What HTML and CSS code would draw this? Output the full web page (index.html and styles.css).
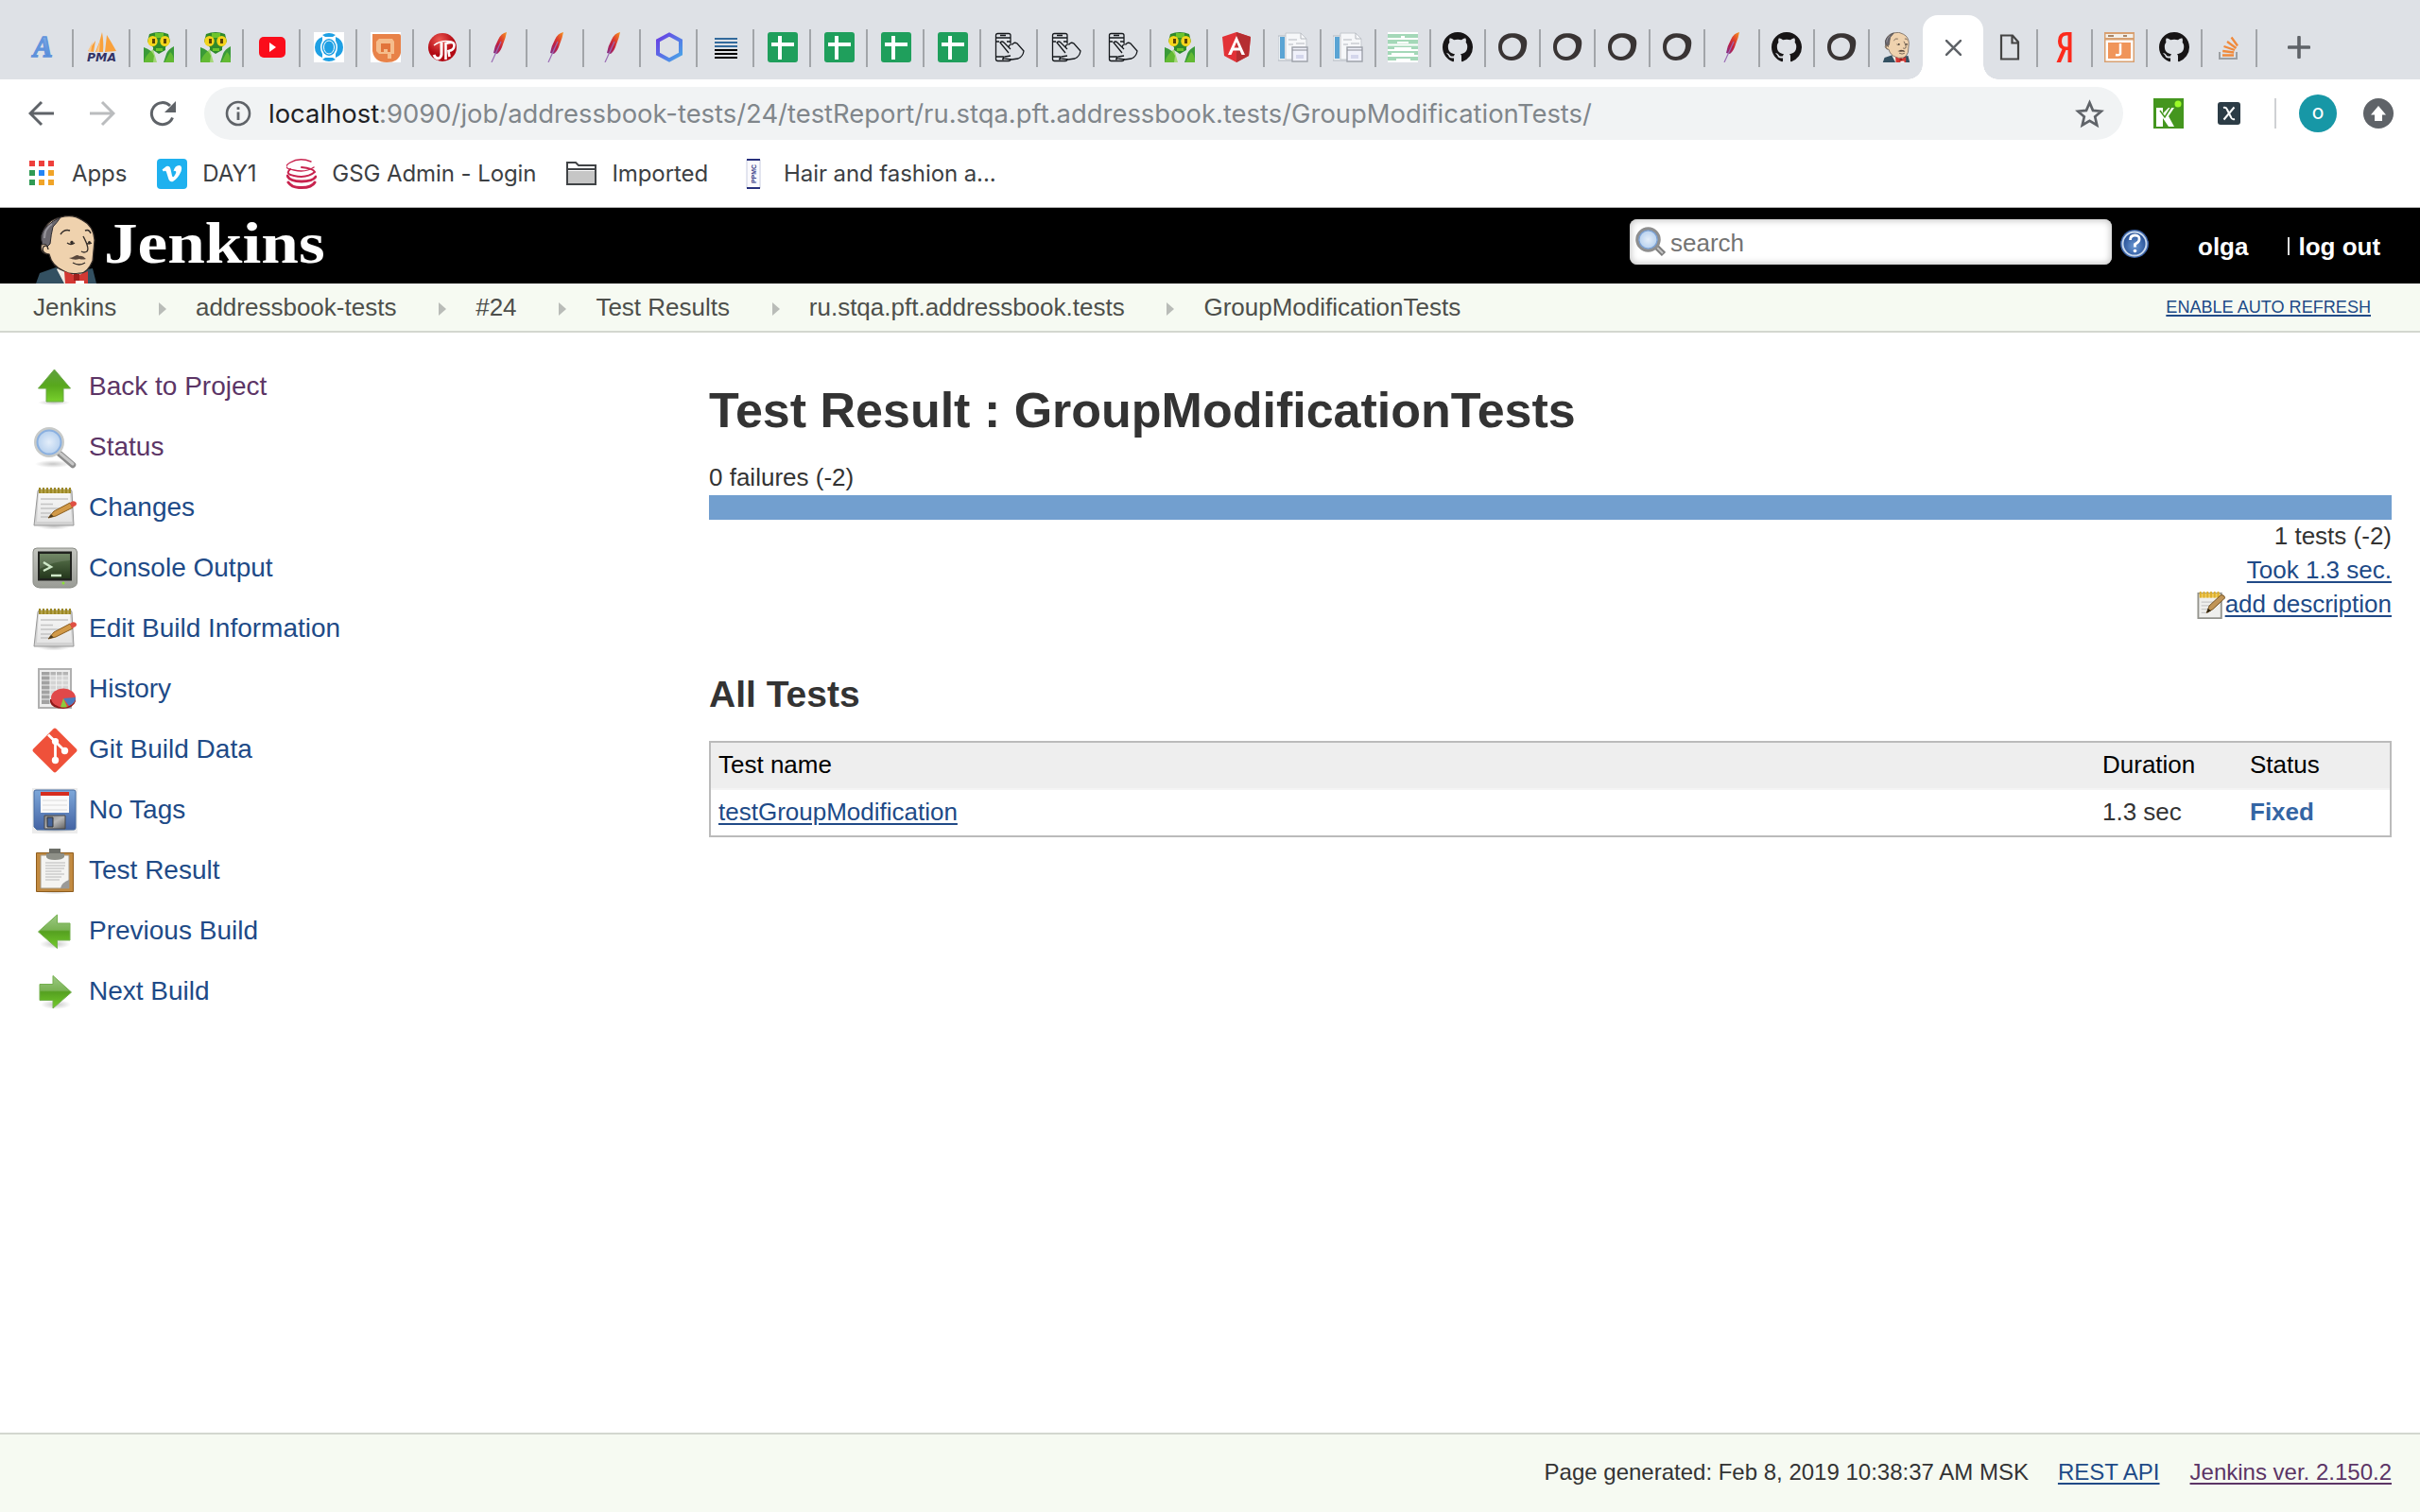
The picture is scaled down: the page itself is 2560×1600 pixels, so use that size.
FILE: index.html
```
<!DOCTYPE html>
<html lang="en">
<head>
<meta charset="utf-8">
<title>GroupModificationTests - Jenkins</title>
<link rel="stylesheet" href="styles.css">
</head>
<body>
<svg class="defs" aria-hidden="true">
  <defs>
    <linearGradient id="g-feather" x1="1" y1="0" x2="0" y2="1"><stop offset="0" stop-color="#f69923"/><stop offset=".35" stop-color="#e0452c"/><stop offset=".6" stop-color="#c21e3e"/><stop offset="1" stop-color="#7e2d8e"/></linearGradient>
    <linearGradient id="g-hex" x1="0" y1="0" x2="1" y2="1"><stop offset="0" stop-color="#6a3be4"/><stop offset="1" stop-color="#47a8e8"/></linearGradient>
    <linearGradient id="g-a" x1="0" y1="0" x2="0" y2="1"><stop offset="0" stop-color="#87b4e8"/><stop offset="1" stop-color="#4a80d4"/></linearGradient>
    <linearGradient id="g-green" x1="0" y1="0" x2="0" y2="1"><stop offset="0" stop-color="#9cc884"/><stop offset=".45" stop-color="#7ab354"/><stop offset=".5" stop-color="#55a020"/><stop offset="1" stop-color="#74cc2c"/></linearGradient>
    <linearGradient id="g-up" x1="0" y1="0" x2="0" y2="1"><stop offset="0" stop-color="#5fa040"/><stop offset=".5" stop-color="#58a81c"/><stop offset="1" stop-color="#78d02c"/></linearGradient>
    <linearGradient id="g-paper" x1="0" y1="0" x2="0" y2="1"><stop offset="0" stop-color="#f8f8f8"/><stop offset="1" stop-color="#e4e4e4"/></linearGradient>
    <radialGradient id="g-lens"><stop offset="0" stop-color="#e4eefa"/><stop offset="1" stop-color="#b0ccec"/></radialGradient>
    <linearGradient id="g-screen" x1="0" y1="0" x2="0" y2="1"><stop offset="0" stop-color="#5d7850"/><stop offset="1" stop-color="#24371c"/></linearGradient>
    <linearGradient id="g-case" x1="0" y1="0" x2="0" y2="1"><stop offset="0" stop-color="#c4c6c0"/><stop offset="1" stop-color="#9a9c96"/></linearGradient>
    <linearGradient id="g-floppy" x1="0" y1="0" x2="0" y2="1"><stop offset="0" stop-color="#7ea8da"/><stop offset="1" stop-color="#4464a4"/></linearGradient>
    <linearGradient id="g-metal" x1="0" y1="0" x2="1" y2="1"><stop offset="0" stop-color="#8a8a8a"/><stop offset=".5" stop-color="#b8b8b8"/><stop offset="1" stop-color="#606060"/></linearGradient>
    <radialGradient id="g-jr" cx=".4" cy=".25"><stop offset="0" stop-color="#ee5a52"/><stop offset="1" stop-color="#b20a14"/></radialGradient>
    <radialGradient id="g-help" cx=".5" cy=".6"><stop offset="0" stop-color="#6c9ad4"/><stop offset="1" stop-color="#2a549a"/></radialGradient>
    <radialGradient id="g-shadow"><stop offset="0" stop-color="#000" stop-opacity=".22"/><stop offset="1" stop-color="#000" stop-opacity="0"/></radialGradient>
  </defs>

  <symbol id="fav-snake" viewBox="0 0 32 32"><path d="M0 16q9 3 11 9l-1 7H0zM32 15q-6 3-8 8l-3 9h11z" fill="#3a9a38"/><path d="M0 32q2-8 10-14l4 14zM32 32q0-8-4-11l-6 11z" fill="#7ed030" opacity=".6"/><path d="M6 2q10-4 20 0l2 8-5 6v3l-7 4-6-4v-3l-6-6z" fill="#2f8a2a"/><path d="M12 1h9v5h-9zM13 17h7v3h-7z" fill="#6cc42c"/><ellipse cx="9.500" cy="9.500" rx="5.200" ry="5.500" fill="#f4d41c"/><ellipse cx="22.500" cy="9.500" rx="5.200" ry="5.500" fill="#f4d41c"/><rect x="9" y="7" width="3" height="5" fill="#5a4408"/><rect x="21" y="7" width="3" height="5" fill="#5a4408"/></symbol>
  <symbol id="fav-youtube" viewBox="0 0 32 32"><rect x="2" y="5" width="28" height="22" rx="5" fill="#fb0d1b"/><path d="m13 11 7 5-7 5z" fill="#fff"/></symbol>
  <symbol id="fav-eye" viewBox="0 0 32 32"><path d="M0 0h32v32H0z" fill="#fff"/><path d="M9 3q7-4 14 0l-3 2h-8zM9 29q7 4 14 0l-3-2h-8zM9 5v4q-4 7 0 14v4Q1 24 1 16T9 5zM23 5v4q4 7 0 14v4q8-3 8-11T23 5z" fill="#1fa0e4"/><ellipse cx="16" cy="16" rx="7.500" ry="9" fill="#1fa0e4"/><ellipse cx="16" cy="16" rx="5.500" ry="7" fill="none" stroke="#fff" stroke-width="1"/></symbol>
  <symbol id="fav-q" viewBox="0 0 32 32"><path d="M0 0h32v32H0z" fill="#fff"/><path d="M2 2h28q2 0 2 2v18q-2 10-15 10T2 20z" fill="#e88248"/><path d="M9 7h14l2 3v13h-3v5h-4v-5H9l-3-3V10z" fill="#f5bd8c"/><path d="M11 12h10v9h-3v-3h-4v3h-3z" fill="#e2743a"/></symbol>
  <symbol id="fav-jr" viewBox="0 0 32 32"><circle cx="16" cy="16" r="15" fill="url(#g-jr)"/><path d="M15 11v13q-1 4-4 4-3-1-4-4" fill="none" stroke="#fff" stroke-width="3"/><path d="M19.500 29V12q9-3 9 2 0 5-6 6l1 6" fill="none" stroke="#fff" stroke-width="2.600"/><path d="M7 14q9-7 21-3" fill="none" stroke="#fff" stroke-width="1.400"/></symbol>
  <symbol id="fav-feather" viewBox="0 0 32 32"><path d="M24 0q-6 1-9 8-4 7-5 14l4 1q4-3 6-10 3-7 4-13z" fill="url(#g-feather)"/><path d="M18 10 8 32" stroke="#9a6cb4" stroke-width="1.200" fill="none"/></symbol>
  <symbol id="fav-hex" viewBox="0 0 32 32"><path d="M16 2.500 28 9v14l-12 6.500L4 23V9z" fill="none" stroke="url(#g-hex)" stroke-width="4"/></symbol>
  <symbol id="fav-lines" viewBox="0 0 32 32"><path d="M4 7h24M4 11h24M4 15h24" stroke="#336a9c" stroke-width="2"/><path d="M4 19h24M4 23h24M4 27h24" stroke="#000" stroke-width="2"/></symbol>
  <symbol id="fav-sheet" viewBox="0 0 32 32"><rect width="32" height="32" rx="3" fill="#1f9f5c"/><path d="M11 4h4v7h13v4H15v14h-4V15H4v-4h7z" fill="#fff"/></symbol>
  <symbol id="fav-touch" viewBox="0 0 32 32"><g fill="none" stroke="#15181c" stroke-width="1.300"><path d="M17 12V3.500Q17 1.500 15 1.500H3.500q-2 0-2 2v25q0 2 2 2H15q2 0 2-2V28M1.500 6H17M1.500 26h8M6 3.500h6M8 28.500h2M2 10h3M13 10h4"/><path d="m15 22-9-11q2-2 4 0l7 7M15 16q1-4 4-3 2-3 5-1l7 8q-1 6-6 8l-7 1-8-1q-2-2 1-2l6-1"/></g></symbol>
  <symbol id="fav-angular" viewBox="0 0 32 32"><path d="M16 0 1 5l2 20 13 7 13-7 2-20z" fill="#e23237"/><path d="M16 0v32l13-7 2-20z" fill="#b52e31"/><path fill-rule="evenodd" d="M16 4 7 24h3.500l2-4.500h7l2 4.500H25zm0 6.500 2.500 6h-5z" fill="#fff"/></symbol>
  <symbol id="fav-docs" viewBox="0 0 32 32"><path d="M0 4h18v26H0z" fill="#eef1f4" stroke="#b4bac2"/><path d="M2 5h5v23H2z" fill="#5aa4d4"/><path d="M8 1h16l6 6v22H8z" fill="#f6f7f9" stroke="#c4c8ce"/><path d="M24 1v6h6M11 8h9M11 13h5M19 12h9" fill="none" stroke="#b4b8be"/><path d="M15 16h16v15H15z" fill="#f0f1fa" stroke="#9ea2aa" stroke-width="1.400"/><path d="M15 19h16" stroke="#8a8e96"/><path d="M19 24h8v4h-8z" fill="#d4d6ec"/></symbol>
  <symbol id="fav-pine" viewBox="0 0 32 32"><path d="M0 0h32v32H0z" fill="#a4d8b8"/><path d="M0 1h32M0 7h32M0 13.500h32M0 19h32M0 25h32M0 31h32M14 5h4M10 11h12M7 17h18M4 23h24M9 29h15" stroke="#fff" stroke-width="2"/></symbol>
  <symbol id="fav-github" viewBox="0 0 16 16"><path fill="#171516" d="M8 0C3.580 0 0 3.580 0 8c0 3.540 2.290 6.530 5.470 7.590.4.070.55-.17.55-.38 0-.19-.01-.82-.01-1.490-2.010.37-2.530-.49-2.690-.94-.09-.23-.48-.94-.82-1.130-.28-.15-.68-.52-.01-.53.63-.01 1.080.58 1.230.82.72 1.210 1.870.87 2.330.66.07-.52.28-.87.51-1.070-1.780-.2-3.640-.89-3.640-3.950 0-.87.31-1.590.82-2.150-.08-.2-.36-1.020.08-2.120 0 0 .67-.21 2.200.82.64-.18 1.320-.27 2-.27s1.360.09 2 .27c1.530-1.040 2.200-.82 2.200-.82.44 1.100.16 1.920.08 2.120.51.56.82 1.270.82 2.150 0 3.070-1.870 3.750-3.650 3.950.29.25.54.73.54 1.480 0 1.070-.01 1.930-.01 2.200 0 .21.15.46.55.38A8.013 8.013 0 0 0 16 8c0-4.420-3.580-8-8-8z"/></symbol>
  <symbol id="fav-ring" viewBox="0 0 32 32"><path fill-rule="evenodd" fill="#393434" d="M15 1.200C22 1 26 3 29 5.500c3 3 2.500 7 1.500 12C29 25 23 30 15 30 7 30 1 24 1 16 1 7 6 1.500 15 1.200zM14 6C9 7 5 10.500 5 16c0 6 4 10 9.500 10C21 26 25 20 25 14.500 25 9 20 5 14 6z"/></symbol>
  <symbol id="butler" viewBox="0 0 66 72">
    <path d="M1 72 5 61l17-6 20 4 19-3 4 16z" fill="#335061"/><path d="M23 57l8 15h16l3-12-22-7z" fill="#f0ede4"/>
    <path d="M10 40Q4 36 8 29L7 22Q11 5 27 2 40-2 50 5q12 6 13 21l-2 22q-6 14-14 13-10 2-16-2Q18 54 15 41z" fill="#efd2ae" stroke="#332c28" stroke-width="1.200"/>
    <path d="M8 31Q4 20 12 12 19 5 27 2q-4 6-8 10-2 8-3 18l-3 3q-1-4-5-2z" fill="#6a676e" stroke="#2c2a2e" stroke-width="1"/><path d="M10 24Q10 14 18 9" fill="none" stroke="#98969c" stroke-width="2"/>
    <path d="M13 41Q6 38 9 33q4-3 5 3" fill="#efd2ae" stroke="#332c28" stroke-width="1.400"/>
    <path d="M27 20q4-6 10-4M53 16q4-2 6 3M34 29q4 3 8 0M54 29q3 2 6 0M51 22q7 13 4 16-3 2-6 0M40 50q7 4 13 0" fill="none" stroke="#332c28" stroke-width="1.400"/><path d="M36 45q3 0 6-2 3-2 5 0 3-1 7 3-4 1-7 0-5 2-11-1z" fill="#5a483c"/>
    <circle cx="39" cy="28.500" r="1.700" fill="#332c28"/><circle cx="57.500" cy="28.500" r="1.500" fill="#332c28"/>
    <path d="M31 59l13 5 12-5v13H32z" fill="#d33833"/><path d="M41 62h6v7h-6z" fill="#a11f1c"/><path d="M43 69h9v3h-9z" fill="#fff"/>
  </symbol>
  <symbol id="fav-page" viewBox="0 0 32 32"><path d="M7 3.500h12l6 7v18H7zM18.500 3.500v8H25" fill="none" stroke="#444" stroke-width="2.200"/></symbol>
  <symbol id="fav-ya" viewBox="0 0 32 32"><path d="M23.500 0v32h-4V19h-2L12 32H7.500l6-14Q9 16 9 9.500 9 0 18 0zM19.500 3.500H18q-5 0-5 6t5 6h1.500z" fill="#fc2a1c" fill-rule="evenodd"/></symbol>
  <symbol id="fav-j" viewBox="0 0 32 32"><path d="M0 0h32v32H0z" fill="#d8a070"/><path d="M1.500 2h29v4h-29z" fill="#f4f0ea"/><path d="M4 3h6v2H4zM20 3h4v2h-4z" fill="#a88668"/><path d="M1.500 8.500h29v22h-29z" fill="#fff"/><path d="M4 11h24v17H4z" fill="#f0955a"/><path d="M17 12v11q-1 2-5 1" stroke="#fff" stroke-width="2.500" fill="none"/></symbol>
  <symbol id="fav-so" viewBox="0 0 32 32"><path d="M6 21v7h18v-7" fill="none" stroke="#9c9fa3" stroke-width="2"/><path d="M9 24.500h12M9.200 20l12 1.500M10.500 15l11.500 4M14 10l9.500 7M18.500 5.500l6.500 9" stroke="#f08a3c" stroke-width="2.300"/></symbol>

  <symbol id="notepad" viewBox="0 0 48 48"><ellipse cx="23" cy="43" rx="18" ry="3.500" fill="url(#g-shadow)"/><path d="M6 6q0-2 2-2h32q2 0 2 2l2 36H2z" fill="#d2d2d2" stroke="#989898"/><path d="M7 6h33l2 32H5z" fill="url(#g-paper)"/><path d="M7 4h34v4H7z" fill="#b4a24a"/><path d="M8 2v6m4-6v6m4-6v6m4-6v6m4-6v6m4-6v6m4-6v6m4-6v6m4-6v6" stroke="#9c8826" stroke-width="2"/><path d="M9 14h29M9 19.500h13M9 24h20M9 29h11M9 33h8" stroke="#c4c4c4" stroke-width="1.500"/><path d="M17 34l6-7 17-9 3 5-18 9z" fill="#d29a48" stroke="#8a5c1c"/><path d="M17 34l3-4 3 2.500z" fill="#4e3c20"/><path d="M40 18q3-3 6-1 2 2 0 4l-4 2z" fill="#e05044"/></symbol>
  <symbol id="lens" viewBox="0 0 48 48"><ellipse cx="22" cy="41" rx="19" ry="4" fill="url(#g-shadow)"/><path d="M29 30l14 12" stroke="#8c8c8c" stroke-width="6.500" stroke-linecap="round"/><path d="M30 30l13 11" stroke="#c8c8c8" stroke-width="3" stroke-linecap="round"/><circle cx="18" cy="18" r="14.500" fill="url(#g-lens)" stroke="#c8cac8" stroke-width="3"/><circle cx="18" cy="18" r="12.500" fill="none" stroke="#8ab0e0" stroke-width="2"/></symbol>
  <symbol id="lens-sm" viewBox="0 0 32 32"><path d="M21 20l9 9" stroke="#7c7c7c" stroke-width="6"/><path d="M22 21l7 7" stroke="#c4c4c4" stroke-width="2"/><circle cx="13.500" cy="13.500" r="11.500" fill="url(#g-lens)" stroke="#8e8e8e" stroke-width="3.500"/><circle cx="13.500" cy="13.500" r="9.600" fill="none" stroke="#7aa0d4" stroke-width="1.300"/></symbol>
  <symbol id="up" viewBox="0 0 48 48"><ellipse cx="23" cy="40" rx="17" ry="3" fill="url(#g-shadow)"/><path d="M23.500 5 40.500 25H33v14H15V25H6.500z" fill="url(#g-up)" stroke="#6aa844"/></symbol>
  <symbol id="arrow" viewBox="0 0 48 48"><ellipse cx="25" cy="37" rx="16" ry="5" fill="url(#g-shadow)"/><path d="M41.500 24 22 6.500v9H8v17h14V41z" fill="url(#g-green)" stroke="#74b04e"/></symbol>
  <symbol id="arrow-left" viewBox="0 0 48 48"><ellipse cx="24" cy="37" rx="16" ry="5" fill="url(#g-shadow)"/><path d="M6.500 24 26.500 6v9H40v18H26.500v8.500z" fill="url(#g-green)" stroke="#74b04e"/></symbol>
  <symbol id="console" viewBox="0 0 48 48"><path d="M5 2h38q4 0 4.500 4v32q0 5-7 6H8q-7-1-7-6V6q0-4 4-4z" fill="url(#g-case)" stroke="#8a8c86"/><path d="M6 5.500h36v31H6z" fill="#20221e"/><path d="M8 8h32v26H8z" fill="url(#g-screen)"/><path d="M8 8h32v7Q22 16 8 24z" fill="#fff" opacity=".13"/><path d="m12 17 8 5-8 4M20 31h11" fill="none" stroke="#cfe8c8" stroke-width="2.400"/><circle cx="33" cy="39" r="1.500" fill="#8ae234"/></symbol>
  <symbol id="history" viewBox="0 0 48 48"><path d="M7 2h34v41H7z" fill="#eee" stroke="#b0b0b0" stroke-width="2"/><path d="M10 5h28v34H10z" fill="#d4d4d4"/><path d="M10 5h9v34h-9z" fill="#a2a2a2"/><path d="M19 5h19v4H19z" fill="#b4b4b4"/><path d="M19 5v34M25.500 5v34M32 5v34M10 9h28M10 14h28M10 19h28M10 24h28M10 29h28M10 34h28" stroke="#f2f2f2" stroke-width="1"/><path d="M19 34v3q2 7 14 7 11-1 13-8v-3z" fill="#8e1a1a"/><ellipse cx="33" cy="32.500" rx="13" ry="10" fill="#e0484a"/><path d="M33 33 46 32q0 6-7 9z" fill="#4a7cc0"/><path d="m33 33 4 9q-4 1-7 0z" fill="#8ccc3c"/></symbol>
  <symbol id="git" viewBox="0 0 48 48"><path d="M22.500 1.200 1.200 22.500q-1.400 1.500 0 3l21.300 21.300q1.500 1.400 3 0l21.300-21.300q1.400-1.500 0-3L25.500 1.200q-1.500-1.400-3 0z" fill="#ef513a"/><path d="M17 7.500l17.500 17M24.500 14v20" stroke="#fff" stroke-width="2.800"/><circle cx="24.500" cy="14.500" r="3.600" fill="#fff"/><circle cx="34.500" cy="24.500" r="3.700" fill="#fff"/><circle cx="24.500" cy="34.500" r="3.700" fill="#fff"/></symbol>
  <symbol id="floppy" viewBox="0 0 48 48"><path d="M0 0h48v48H0z" fill="#ececec"/><ellipse cx="24" cy="44" rx="22" ry="3" fill="url(#g-shadow)"/><path d="M4 2h40q2 0 2 2v38q0 2-2 2H5l-3-3V4q0-2 2-2z" fill="url(#g-floppy)" stroke="#456a9e"/><path d="M9 5h30v21H9z" fill="#fafafa"/><path d="M9 4h30v4H9z" fill="#d62c1e"/><path d="M11 13h26M11 18h26M11 23h26" stroke="#dcdcdc"/><path d="M13 29h22v14H13z" fill="url(#g-metal)" stroke="#4a4a4a"/><path d="M16 31h6v10h-6z" fill="#44649c" stroke="#333"/></symbol>
  <symbol id="clipboard" viewBox="0 0 48 48"><ellipse cx="24" cy="45.500" rx="18" ry="3" fill="url(#g-shadow)"/><path d="M4.500 4.500h39v41h-39z" fill="#c28a40" stroke="#8e5c1c"/><path d="M9 7h30v35H9z" fill="#f4f4f2" stroke="#a49884"/><path d="M14 15h21M14 18h21M14 21h20M14 24h17M14 27h20M14 30h17M14 33h15" stroke="#ccc" stroke-width="1.600"/><path d="M39 33v9h-9q1-6 9-9z" fill="#9a9a98"/><path d="M15 5h3V0h12v5h4v4q-2 3-10 3T15 9z" fill="#8e9088"/><path d="M18 0h12v5H18z" fill="#6c6e68"/></symbol>
  <symbol id="edit" viewBox="0 0 32 32"><path d="M1.500 3h26v28h-26z" fill="#efefed" stroke="#94948e" stroke-width="2"/><path d="M5 13h15M5 17h12M5 21h8M5 25h8" stroke="#c8c8c8" stroke-width="1.400"/><path d="M3 3h23v5H3z" fill="#f0cc5a"/><path d="M4 1v7m4-7v7m4-7v7m4-7v7m4-7v7m4-7v7" stroke="#dcae2c" stroke-width="2"/><path d="M11 25 14 17 27 5q3-1 5 3L18 21z" fill="#c09456" stroke="#6e4c1c"/><path d="m11 25 1.500-5 3.500 3z" fill="#2e2410"/></symbol>
  <symbol id="help" viewBox="0 0 32 32"><circle cx="16" cy="16" r="15" fill="#3a62a6"/><circle cx="16" cy="16" r="12.500" fill="url(#g-help)" stroke="#c8d8ec" stroke-width="2"/><path d="M11.500 12q0-5 5-5t4.500 4.500q0 2.500-4.500 5v3" fill="none" stroke="#fff" stroke-width="2.800"/><circle cx="16.500" cy="23.500" r="1.800" fill="#fff"/></symbol>
  <symbol id="sep" viewBox="0 0 8 14"><path d="m0 0 8 7-8 7z" fill="#b9bcb8"/></symbol>
</svg>

<div class="tabs">
  <div class="tab"><svg viewBox="0 0 32 32"><text x="4" y="26" font-family="Liberation Serif" font-weight="700" font-style="italic" font-size="31" fill="url(#g-a)" stroke="#5f92dc" stroke-width="1.400">A</text></svg></div>
  <div class="tab"><svg viewBox="0 0 32 32"><path d="M1 20 9 9 7 21zM9 21Q14 10 16 0q2 12 1 21zM19 21 21 3q5 8 10 17z" fill="#f9a13c"/><path d="M1 20 6 10 4 21zM10 21q3-8 4-14l-1 14z" fill="#fbc88a"/><text x="0" y="31" font-family="DejaVu Sans" font-weight="700" font-style="italic" font-size="12" textLength="31" lengthAdjust="spacingAndGlyphs" fill="#333366">PMA</text></svg></div>
  <div class="tab"><svg><use href="#fav-snake"/></svg></div>
  <div class="tab"><svg><use href="#fav-snake"/></svg></div>
  <div class="tab"><svg><use href="#fav-youtube"/></svg></div>
  <div class="tab"><svg><use href="#fav-eye"/></svg></div>
  <div class="tab"><svg><use href="#fav-q"/></svg></div>
  <div class="tab"><svg><use href="#fav-jr"/></svg></div>
  <div class="tab"><svg><use href="#fav-feather"/></svg></div>
  <div class="tab"><svg><use href="#fav-feather"/></svg></div>
  <div class="tab"><svg><use href="#fav-feather"/></svg></div>
  <div class="tab"><svg><use href="#fav-hex"/></svg></div>
  <div class="tab"><svg><use href="#fav-lines"/></svg></div>
  <div class="tab"><svg><use href="#fav-sheet"/></svg></div>
  <div class="tab"><svg><use href="#fav-sheet"/></svg></div>
  <div class="tab"><svg><use href="#fav-sheet"/></svg></div>
  <div class="tab"><svg><use href="#fav-sheet"/></svg></div>
  <div class="tab"><svg><use href="#fav-touch"/></svg></div>
  <div class="tab"><svg><use href="#fav-touch"/></svg></div>
  <div class="tab"><svg><use href="#fav-touch"/></svg></div>
  <div class="tab"><svg><use href="#fav-snake"/></svg></div>
  <div class="tab"><svg><use href="#fav-angular"/></svg></div>
  <div class="tab"><svg><use href="#fav-docs"/></svg></div>
  <div class="tab narrow"><svg><use href="#fav-docs"/></svg></div>
  <div class="tab narrow"><svg><use href="#fav-pine"/></svg></div>
  <div class="tab narrow"><svg><use href="#fav-github"/></svg></div>
  <div class="tab narrow"><svg><use href="#fav-ring"/></svg></div>
  <div class="tab narrow"><svg><use href="#fav-ring"/></svg></div>
  <div class="tab narrow"><svg><use href="#fav-ring"/></svg></div>
  <div class="tab narrow"><svg><use href="#fav-ring"/></svg></div>
  <div class="tab narrow"><svg><use href="#fav-feather"/></svg></div>
  <div class="tab narrow"><svg><use href="#fav-github"/></svg></div>
  <div class="tab narrow"><svg><use href="#fav-ring"/></svg></div>
  <div class="tab last"><svg><use href="#butler"/></svg></div>
  <div class="tab-active"><svg viewBox="0 0 16 16"><path d="m1 1 14 14M15 1 1 15" stroke="#5f6368" stroke-width="2.400" stroke-linecap="round"/></svg></div>
  <div class="tab narrow"><svg><use href="#fav-page"/></svg></div>
  <div class="tab narrow"><svg><use href="#fav-ya"/></svg></div>
  <div class="tab narrow"><svg><use href="#fav-j"/></svg></div>
  <div class="tab narrow"><svg><use href="#fav-github"/></svg></div>
  <div class="tab narrow"><svg><use href="#fav-so"/></svg></div>
  <svg class="new-tab" viewBox="0 0 24 24"><path d="M12 1.500v21M1.500 12h21" stroke="#5f6368" stroke-width="3.600" stroke-linecap="round"/></svg>
</div>

<div class="toolbar">
  <svg class="nav" viewBox="0 0 28 28"><path d="M27 14H3M14 2 2 14l12 12" fill="none" stroke="#5f6368" stroke-width="3"/></svg>
  <svg class="nav" viewBox="0 0 28 28"><path d="M1 14h24M14 2l12 12-12 12" fill="none" stroke="#babcbe" stroke-width="3"/></svg>
  <svg class="nav" viewBox="0 0 28 28"><path d="M24.500 18.500A11.500 11.500 0 1 1 22 6" fill="none" stroke="#5f6368" stroke-width="3"/><path d="M28 1v12H16z" fill="#5f6368"/></svg>
  <div class="address">
    <svg class="info" viewBox="0 0 28 28"><circle cx="14" cy="14" r="12" fill="none" stroke="#5f6368" stroke-width="2.600"/><path d="M12.600 12.500h2.800V21h-2.800zM12.600 7.200h2.800V10h-2.800z" fill="#5f6368"/></svg>
    <span class="url"><span class="host">localhost</span>:9090/job/addressbook-tests/24/testReport/ru.stqa.pft.addressbook.tests/GroupModificationTests/</span>
    <svg class="star" viewBox="0 0 30 30"><path d="m15 3.500 3.400 8 8.600.8-6.500 5.700 2 8.500-7.500-4.500-7.500 4.500 2-8.500L3 12.300l8.600-.8z" fill="none" stroke="#5f6368" stroke-width="2.600"/></svg>
  </div>
  <svg class="ext" viewBox="0 0 32 32"><path d="M0 0h32v32H0z" fill="#44961e"/><path d="M3 10h7v6l6-6h6l-6 9 6 11h-6l-6-9v9H3z" fill="#fff"/><path d="m7 13 5 7 7-11" fill="none" stroke="#44961e" stroke-width="1.500"/><circle cx="26" cy="6" r="3.500" fill="#9cfa28"/></svg>
  <svg class="ext-sm" viewBox="0 0 24 24"><rect width="24" height="24" rx="3" fill="#2c3c46"/><path d="M6 6q3-1 4 2l4 8q1 3 4 2M17.500 5.500 6.500 18.500" fill="none" stroke="#fff" stroke-width="2"/></svg>
  <span class="divider"></span>
  <span class="avatar">o</span>
  <svg class="update" viewBox="0 0 32 32"><circle cx="16" cy="16" r="16" fill="#5f6368"/><path d="m16 8 8 9.500h-4V24h-8v-6.500H8z" fill="#fff"/></svg>
</div>

<div class="bookmarks">
  <div class="bookmark"><svg viewBox="0 0 32 32"><path d="M3 2h6v6H3zM13 2h6v6h-6zM23 2h6v6h-6z" fill="#ee3f3c"/><path d="M3 12h6v6H3zM3 22h6v6H3z" fill="#2f9a54"/><path d="M13 12h6v6h-6z" fill="#2486f6"/><path d="M23 12h6v6h-6zM13 22h6v6h-6zM23 22h6v6h-6z" fill="#f0a428"/></svg><span>Apps</span></div>
  <div class="bookmark"><svg viewBox="0 0 32 32"><rect width="32" height="32" rx="4" fill="#1eb1ef"/><path d="M5.500 11.500 10 8q3.500-1 4.500 3l1.500 7q1 2.500 2.500 0 3-4.500 1-5-1-.5-2 .3Q19 7 23.500 7q4 .5 2 6.500-3 7-8.500 10.500-3 1-4.500-2L10 14q-1-2-3-.5z" fill="#fff"/></svg><span>DAY1</span></div>
  <div class="bookmark"><svg viewBox="0 0 32 32"><g fill="none" stroke="#c8234e" stroke-linecap="round"><path d="M26 3Q14-2 4 4t4 8q12 3 21-3" stroke-width="1.400"/><path d="M4 11Q-2 16 8 18q14 3 22-4-2-4-14-5" stroke-width="2"/><path d="M1 18q2 6 15 6 12 0 15-5" stroke-width="2.800"/><path d="M2 25q4 6 14 5.500 11 0 14-5.500" stroke-width="3"/></g></svg><span>GSG Admin - Login</span></div>
  <div class="bookmark"><svg viewBox="0 0 32 32"><path d="M1 27V4h9l3 3h18v20z" fill="#fff" stroke="#404346" stroke-width="2"/><path d="M2 13h28v13H2z" fill="#c6c6c6"/><path d="M1 11h30" stroke="#404346" stroke-width="2"/></svg><span>Imported</span></div>
  <div class="bookmark"><svg viewBox="0 0 32 32"><path d="M9 1h14v30H9z" fill="#fafafd" stroke="#c8cce0"/><path d="M9 1h14M9 31h14" stroke="#27307c" stroke-width="2"/><text transform="translate(19 26) rotate(-90)" font-family="Liberation Sans" font-weight="700" font-size="7.500" textLength="20" lengthAdjust="spacingAndGlyphs" fill="#3a4288">PPMC</text></svg><span>Hair and fashion a...</span></div>
</div>

<header class="header">
  <svg class="butler"><use href="#butler"/></svg>
  <span class="brand">Jenkins</span>
  <div class="search"><svg><use href="#lens-sm"/></svg><span>search</span></div>
  <svg class="help"><use href="#help"/></svg>
  <a class="user">olga</a>
  <span class="bar"></span>
  <a class="logout">log out</a>
</header>

<nav class="crumbs">
  <a>Jenkins</a><svg><use href="#sep"/></svg>
  <a>addressbook-tests</a><svg><use href="#sep"/></svg>
  <a>#24</a><svg><use href="#sep"/></svg>
  <a>Test Results</a><svg><use href="#sep"/></svg>
  <a>ru.stqa.pft.addressbook.tests</a><svg><use href="#sep"/></svg>
  <a>GroupModificationTests</a>
  <a class="refresh">ENABLE AUTO REFRESH</a>
</nav>

<div class="body">
  <aside class="side">
    <a class="task visited"><svg><use href="#up"/></svg><span>Back to Project</span></a>
    <a class="task visited"><svg><use href="#lens"/></svg><span>Status</span></a>
    <a class="task"><svg><use href="#notepad"/></svg><span>Changes</span></a>
    <a class="task"><svg><use href="#console"/></svg><span>Console Output</span></a>
    <a class="task"><svg><use href="#notepad"/></svg><span>Edit Build Information</span></a>
    <a class="task"><svg><use href="#history"/></svg><span>History</span></a>
    <a class="task"><svg><use href="#git"/></svg><span>Git Build Data</span></a>
    <a class="task"><svg><use href="#floppy"/></svg><span>No Tags</span></a>
    <a class="task"><svg><use href="#clipboard"/></svg><span>Test Result</span></a>
    <a class="task"><svg><use href="#arrow-left"/></svg><span>Previous Build</span></a>
    <a class="task"><svg><use href="#arrow"/></svg><span>Next Build</span></a>
  </aside>
  <main class="main">
    <h1>Test Result : GroupModificationTests</h1>
    <div class="failures">0 failures (-2)</div>
    <div class="progress"></div>
    <div class="summary">
      <div>1 tests (-2)</div>
      <div><a class="link">Took 1.3 sec.</a></div>
      <div class="desc"><svg><use href="#edit"/></svg><a class="link">add description</a></div>
    </div>
    <h2>All Tests</h2>
    <div class="table">
      <div class="row head"><span>Test name</span><span>Duration</span><span>Status</span></div>
      <div class="row"><span><a class="link">testGroupModification</a></span><span>1.3 sec</span><span class="fixed">Fixed</span></div>
    </div>
  </main>
</div>

<footer class="footer">
  <span>Page generated: Feb 8, 2019 10:38:37 AM MSK</span>
  <a class="link api">REST API</a>
  <a class="link visited">Jenkins ver. 2.150.2</a>
</footer>
</body>
</html>
```
FILE: styles.css
```
* { box-sizing: border-box; }
body { margin: 0; width: 2560px; height: 1600px; overflow: hidden; display: flex; flex-direction: column; background: #fff; color: #333; font-family: "Liberation Sans", Arial, sans-serif; font-size: 26px; }
svg { display: block; flex: none; }
.defs { position: absolute; width: 0; height: 0; }
a { color: #204a87; }

/* Browser tab strip */
.tabs { flex: none; height: 84px; display: flex; padding-left: 18px; background: #dee1e6; }
.tab { flex: none; width: 60px; height: 40px; margin-top: 31px; padding: 3px 12px 0 14px; border-right: 2px solid #a2a5a9; }
.tab svg { width: 32px; height: 32px; }
.tab:first-child { padding-left: 13px; }
.tab.narrow { width: 58px; padding-left: 12px; }
.tab.last { width: 56px; padding-left: 12px; border-right: 0; }
.tab-active { position: relative; flex: none; display: flex; align-items: center; justify-content: center; width: 64px; height: 68px; margin-top: 16px; border-radius: 16px 16px 0 0; background: #fff; }
.tab-active::before, .tab-active::after { content: ""; position: absolute; bottom: 0; width: 16px; height: 16px; }
.tab-active::before { left: -16px; background: radial-gradient(circle at 0 0, transparent 15.5px, #fff 16px); }
.tab-active::after { right: -16px; background: radial-gradient(circle at 100% 0, transparent 15.5px, #fff 16px); }
.tab-active svg { width: 17px; height: 17px; }
.new-tab { width: 24px; height: 24px; margin: 38px 0 0 32px; }

/* Address bar */
.toolbar { flex: none; height: 72px; display: flex; align-items: center; padding-left: 30px; }
.nav { width: 28px; height: 28px; margin-right: 36px; }
.nav:nth-child(3) { margin-right: 30px; }
.address { flex: none; width: 2030px; height: 56px; display: flex; align-items: center; padding: 0 20px 0 22px; border-radius: 28px; background: #f1f3f4; }
.info { width: 28px; height: 28px; }
.url { flex: 1; margin-left: 18px; font-family: Inter, sans-serif; font-size: 27.42px; line-height: 40px; color: #80868b; white-space: nowrap; }
.host { color: #202124; }
.star { width: 31px; height: 31px; }
.ext { width: 32px; height: 32px; margin-left: 32px; }
.ext-sm { width: 24px; height: 24px; margin-left: 36px; }
.divider { width: 2px; height: 32px; margin-left: 36px; background: #cfd1d4; }
.avatar { width: 40px; height: 40px; margin-left: 24px; border-radius: 50%; background: #1797a6; color: #fff; font: 22px/38px Roboto, sans-serif; text-align: center; }
.update { width: 32px; height: 32px; margin-left: 28px; }

/* Bookmarks */
.bookmarks { flex: none; height: 64px; display: flex; align-items: flex-start; gap: 32px; padding: 12px 0 0 28px; border-bottom: 1px solid #b6b6b6; }
.bookmark { display: flex; align-items: center; gap: 16px; }
.bookmark svg { width: 32px; height: 32px; }
.bookmark span { margin-top: -1px; font-family: Inter, sans-serif; font-size: 24px; letter-spacing: -0.08px; line-height: 32px; color: #3c4043; white-space: nowrap; }

/* Jenkins header */
.header { flex: none; height: 80px; display: flex; align-items: flex-start; background: #000; color: #fff; }
.butler { width: 66px; height: 72px; margin: 8px 0 0 37px; }
.brand { width: 198px; margin: -2px 0 0 7px; transform: scaleX(1.168); transform-origin: 0 0; font: bold 61px/80px "Liberation Serif", serif; white-space: nowrap; }
.search { width: 510px; height: 48px; margin: 12px 0 0 1416px; padding-left: 6px; display: flex; align-items: center; gap: 5px; border-radius: 8px; background: #fff; box-shadow: inset 0 0 6px 2px #ccc; color: #737373; }
.search svg { width: 32px; height: 32px; }
.search span { line-height: 32px; margin-top: 2px; }
.help { width: 32px; height: 32px; margin: 22px 0 0 8px; }
.header a { color: #fff; font-weight: bold; line-height: 40px; margin-top: 21px; }
.user { margin-left: 51px; }
.bar { width: 2px; height: 19px; margin: 31px 0 0 42px; background: #ddd; }
.logout { margin-left: 9px; }

/* Breadcrumbs */
.crumbs { flex: none; height: 52px; display: flex; align-items: center; padding: 0 52px 0 35px; background: #f6faf2; border-bottom: 2px solid #d3d7cf; }
.crumbs a { color: #4d4f4b; line-height: 50px; }
.crumbs svg { width: 8px; height: 14px; margin: 3px 31.3px 0 44.5px; }
.crumbs .refresh { margin-left: auto; font-size: 18.08px; color: #204a87; text-decoration: underline; text-underline-offset: 2px; text-decoration-thickness: 2px; }

/* Page */
.body { flex: 1; display: flex; }
.side { flex: none; width: 750px; padding: 34px 0 0 34px; }
.task { display: flex; align-items: center; gap: 12px; height: 48px; margin-bottom: 16px; font-size: 28px; }
.task svg { width: 48px; height: 48px; }
.task span { line-height: 36px; margin-top: -3px; }
.visited, .link.visited { color: #5c3566; }
.main { flex: none; width: 1780px; padding-top: 52px; }
h1, h2 { margin: 0; color: #333; }
h1 { font-size: 52px; line-height: 60px; }
.failures { margin-top: 23px; line-height: 36px; }
.progress { height: 26px; margin-top: 1px; background: #729fcf; }
.summary { margin-top: -1px; text-align: right; line-height: 36px; }
.link { text-decoration: underline; text-decoration-thickness: 2px; text-underline-offset: 3px; }
.desc { display: flex; justify-content: flex-end; align-items: center; }
.desc svg { width: 30px; height: 30px; margin-top: 1px; }
h2 { margin-top: 54px; font-size: 39px; line-height: 48px; }
.table { margin-top: 25px; border: 2px solid #bbb; }
.row { display: grid; grid-template-columns: 1464px 156px 1fr; height: 48px; line-height: 47px; }
.row > span { padding-left: 8px; }
.head { height: 50px; background: #eee; color: #000; border-bottom: 2px solid #f4f4f4; }
.fixed { color: #3465a4; font-weight: bold; }

.footer { flex: none; height: 84px; display: flex; justify-content: flex-end; gap: 31px; padding-right: 30px; border-top: 2px solid #d3d7cf; background: #f6faf2; font-size: 24px; line-height: 80px; }
.api { margin-right: 1px; }
```
